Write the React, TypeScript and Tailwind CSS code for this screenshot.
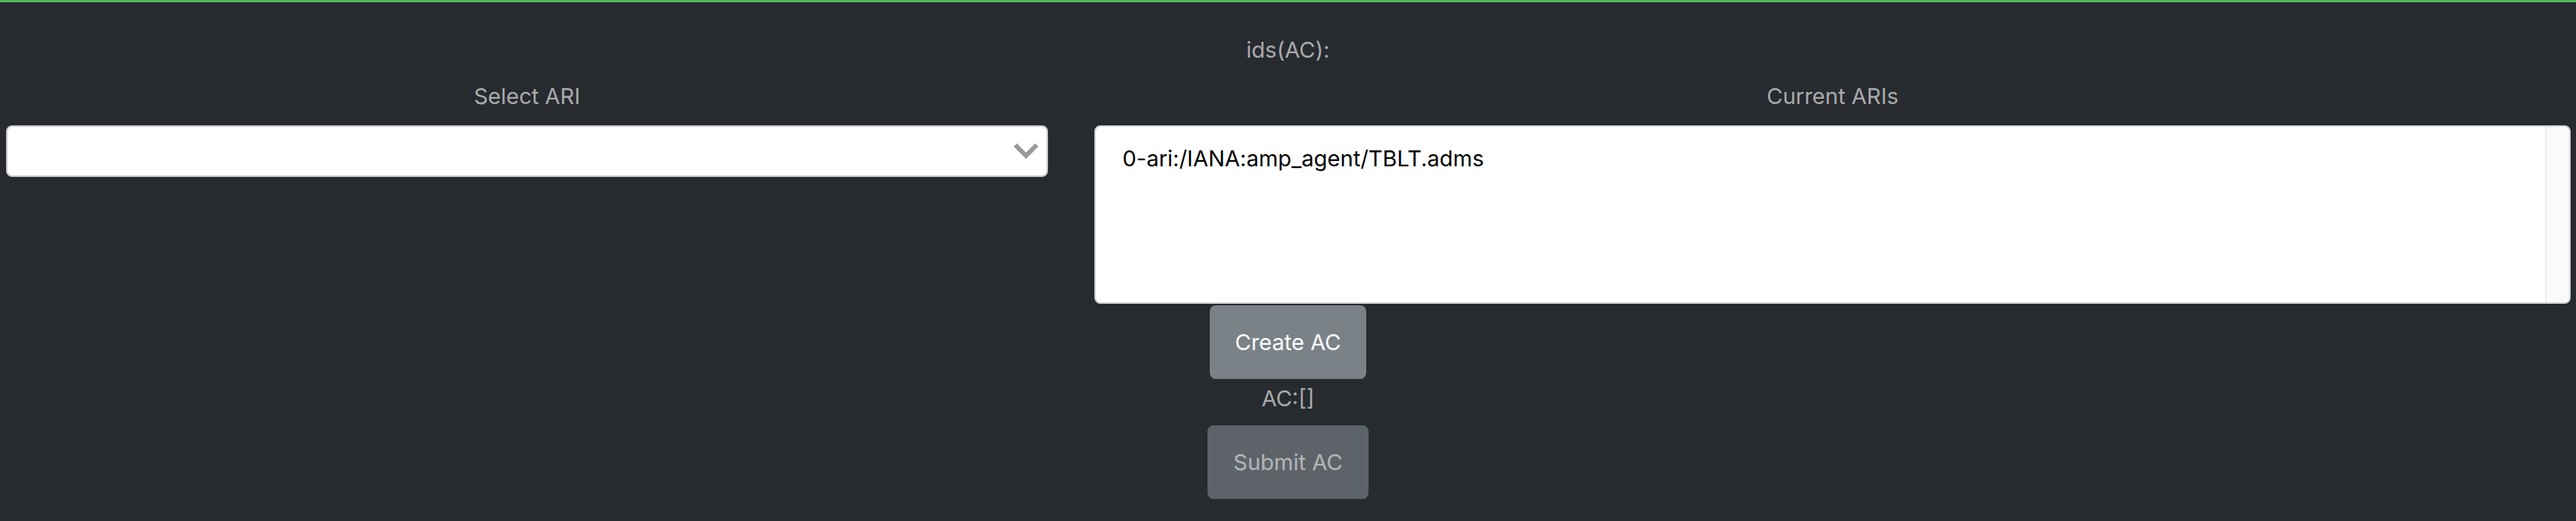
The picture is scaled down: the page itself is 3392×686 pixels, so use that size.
import React from 'react'

const font = { fontFamily: 'Inter, "Noto Sans", "Liberation Sans", sans-serif' }

function Chevron() {
  return (
    <svg width="34" height="26" viewBox="0 0 34 26" className="absolute right-[10px] top-[20px]">
      <polyline points="5,6 17,18 29,6" fill="none" stroke="#9a9a9a" strokeWidth="6" strokeLinecap="square" strokeLinejoin="miter" />
    </svg>
  )
}

export default function App() {
  return (
    <div
      className="h-[686px] overflow-hidden w-full bg-[#272b30] border-t-[3px] border-[#52b85a] pt-[42px] text-[29px] text-[#aaaaaa]"
      style={font}
    >
      <div className="h-[42px] leading-[42px] text-center">ids(AC):</div>

      <div className="mt-[19px] flex gap-[61px] pl-[8px] pr-[7px]">
        <div className="w-[1372px] flex flex-col">
          <div className="h-[42px] leading-[42px] text-center">Select ARI</div>
          <div className="relative mt-[17px] h-[68px] bg-white border-2 border-[#cccccc] rounded-[8px]">
            <Chevron />
          </div>
        </div>

        <div className="flex-1 flex flex-col">
          <div className="h-[42px] leading-[42px] text-center">Current ARIs</div>
          <div className="mt-[17px] h-[235px] flex bg-white border-2 border-[#d0d4d8] rounded-[8px] overflow-hidden">
            <div className="flex-1 pl-[35px] pt-[21px] text-black leading-[42px]">
              0-ari:/IANA:amp_agent/TBLT.adms
            </div>
            <div className="w-[31px] bg-[#fafafa] border-l border-[#e4e4e4]" />
          </div>
        </div>
      </div>

      <div className="flex flex-col items-center">
        <button className="mt-[2px] h-[97px] w-[206px] rounded-[8px] bg-[#7a8288] text-white leading-[42px]">
          Create AC
        </button>
        <div className="mt-[5px] h-[42px] leading-[42px]">AC:[]</div>
        <button
          disabled
          className="mt-[14px] h-[97px] w-[212px] rounded-[8px] bg-[#7a8288] text-white leading-[42px] opacity-65"
        >
          Submit AC
        </button>
      </div>
    </div>
  )
}
